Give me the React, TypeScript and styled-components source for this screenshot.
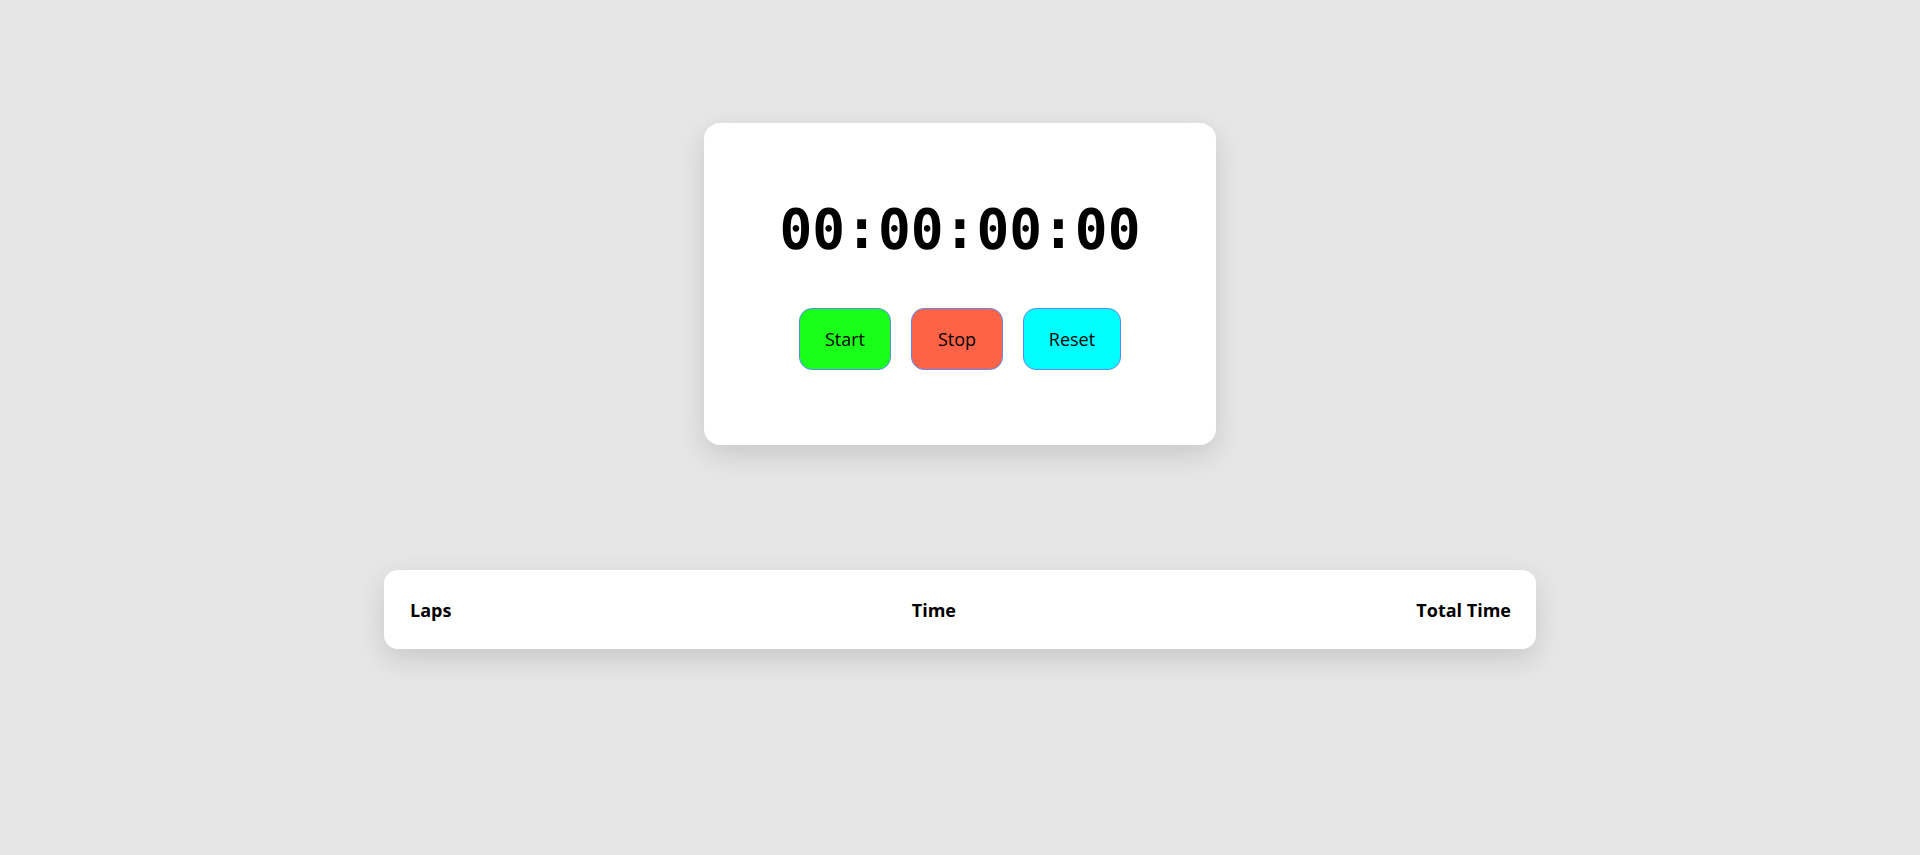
import React, {useEffect, useRef, useState} from 'react';
import styled, {createGlobalStyle} from 'styled-components';

const GlobalStyle = createGlobalStyle`
  html, body {
    margin: 0;
    padding: 0;
    background: #e6e6e6;
    font-family: "Open Sans", "Noto Sans", sans-serif;
  }
`;

const Page = styled.div`
  display: flex;
  flex-direction: column;
  align-items: center;
  box-sizing: border-box;
  min-height: 100vh;
  padding: 123px 0 60px;
  gap: 125px;
`;

const Card = styled.div`
  width: 512px;
  height: 322px;
  box-sizing: border-box;
  background: #fff;
  border-radius: 16px;
  box-shadow: 0 10px 28px rgba(0, 0, 0, 0.13);
  display: flex;
  flex-direction: column;
  align-items: center;
  padding-top: 74px;
`;

const Display = styled.h1`
  margin: 0;
  font-family: "DejaVu Sans Mono", "Liberation Mono", monospace;
  font-weight: bold;
  font-size: 54.5px;
  line-height: 64px;
  letter-spacing: 0;
  color: #000;
`;

const Controls = styled.div`
  display: flex;
  gap: 20px;
  margin-top: 47px;
`;

const Button = styled.button<{ $bg: string; $w: number }>`
  width: ${p => p.$w}px;
  height: 62px;
  background: ${p => p.$bg};
  border: 1px solid #5a8bf2;
  border-radius: 13px;
  font-family: "Open Sans", "Noto Sans", sans-serif;
  font-size: 18px;
  color: #000;
  cursor: pointer;
`;

const LapTable = styled.div`
  width: 1152px;
  height: 79px;
  box-sizing: border-box;
  background: #fff;
  border-radius: 14px;
  box-shadow: 0 10px 28px rgba(0, 0, 0, 0.13);
  display: flex;
  justify-content: space-between;
  align-items: center;
  padding: 0 25px 0 26px;
`;

const Heading = styled.span`
  font-weight: bold;
  font-size: 18px;
  color: #000;
`;

const pad = (n: number) => String(n).padStart(2, '0');

const format = (cs: number) => {
  const h = Math.floor(cs / 360000);
  const m = Math.floor(cs / 6000) % 60;
  const s = Math.floor(cs / 100) % 60;
  const c = cs % 100;
  return `${pad(h)}:${pad(m)}:${pad(s)}:${pad(c)}`;
};

const App: React.FC = () => {
  const [time, setTime] = useState(0);
  const [running, setRunning] = useState(false);
  const timerRef = useRef<number | null>(null);

  useEffect(() => {
    if (!running) return;
    timerRef.current = window.setInterval(() => setTime(t => t + 1), 10);
    return () => {
      if (timerRef.current) window.clearInterval(timerRef.current);
    };
  }, [running]);

  return (
    <>
      <GlobalStyle/>
      <Page>
        <Card>
          <Display>{format(time)}</Display>
          <Controls>
            <Button $bg="#1aff1a" $w={92} onClick={() => setRunning(true)}>Start</Button>
            <Button $bg="#ff6347" $w={92} onClick={() => setRunning(false)}>Stop</Button>
            <Button $bg="#00ffff" $w={98} onClick={() => { setRunning(false); setTime(0); }}>Reset</Button>
          </Controls>
        </Card>
        <LapTable>
          <Heading>Laps</Heading>
          <Heading>Time</Heading>
          <Heading>Total Time</Heading>
        </LapTable>
      </Page>
    </>
  );
};

export default App;
